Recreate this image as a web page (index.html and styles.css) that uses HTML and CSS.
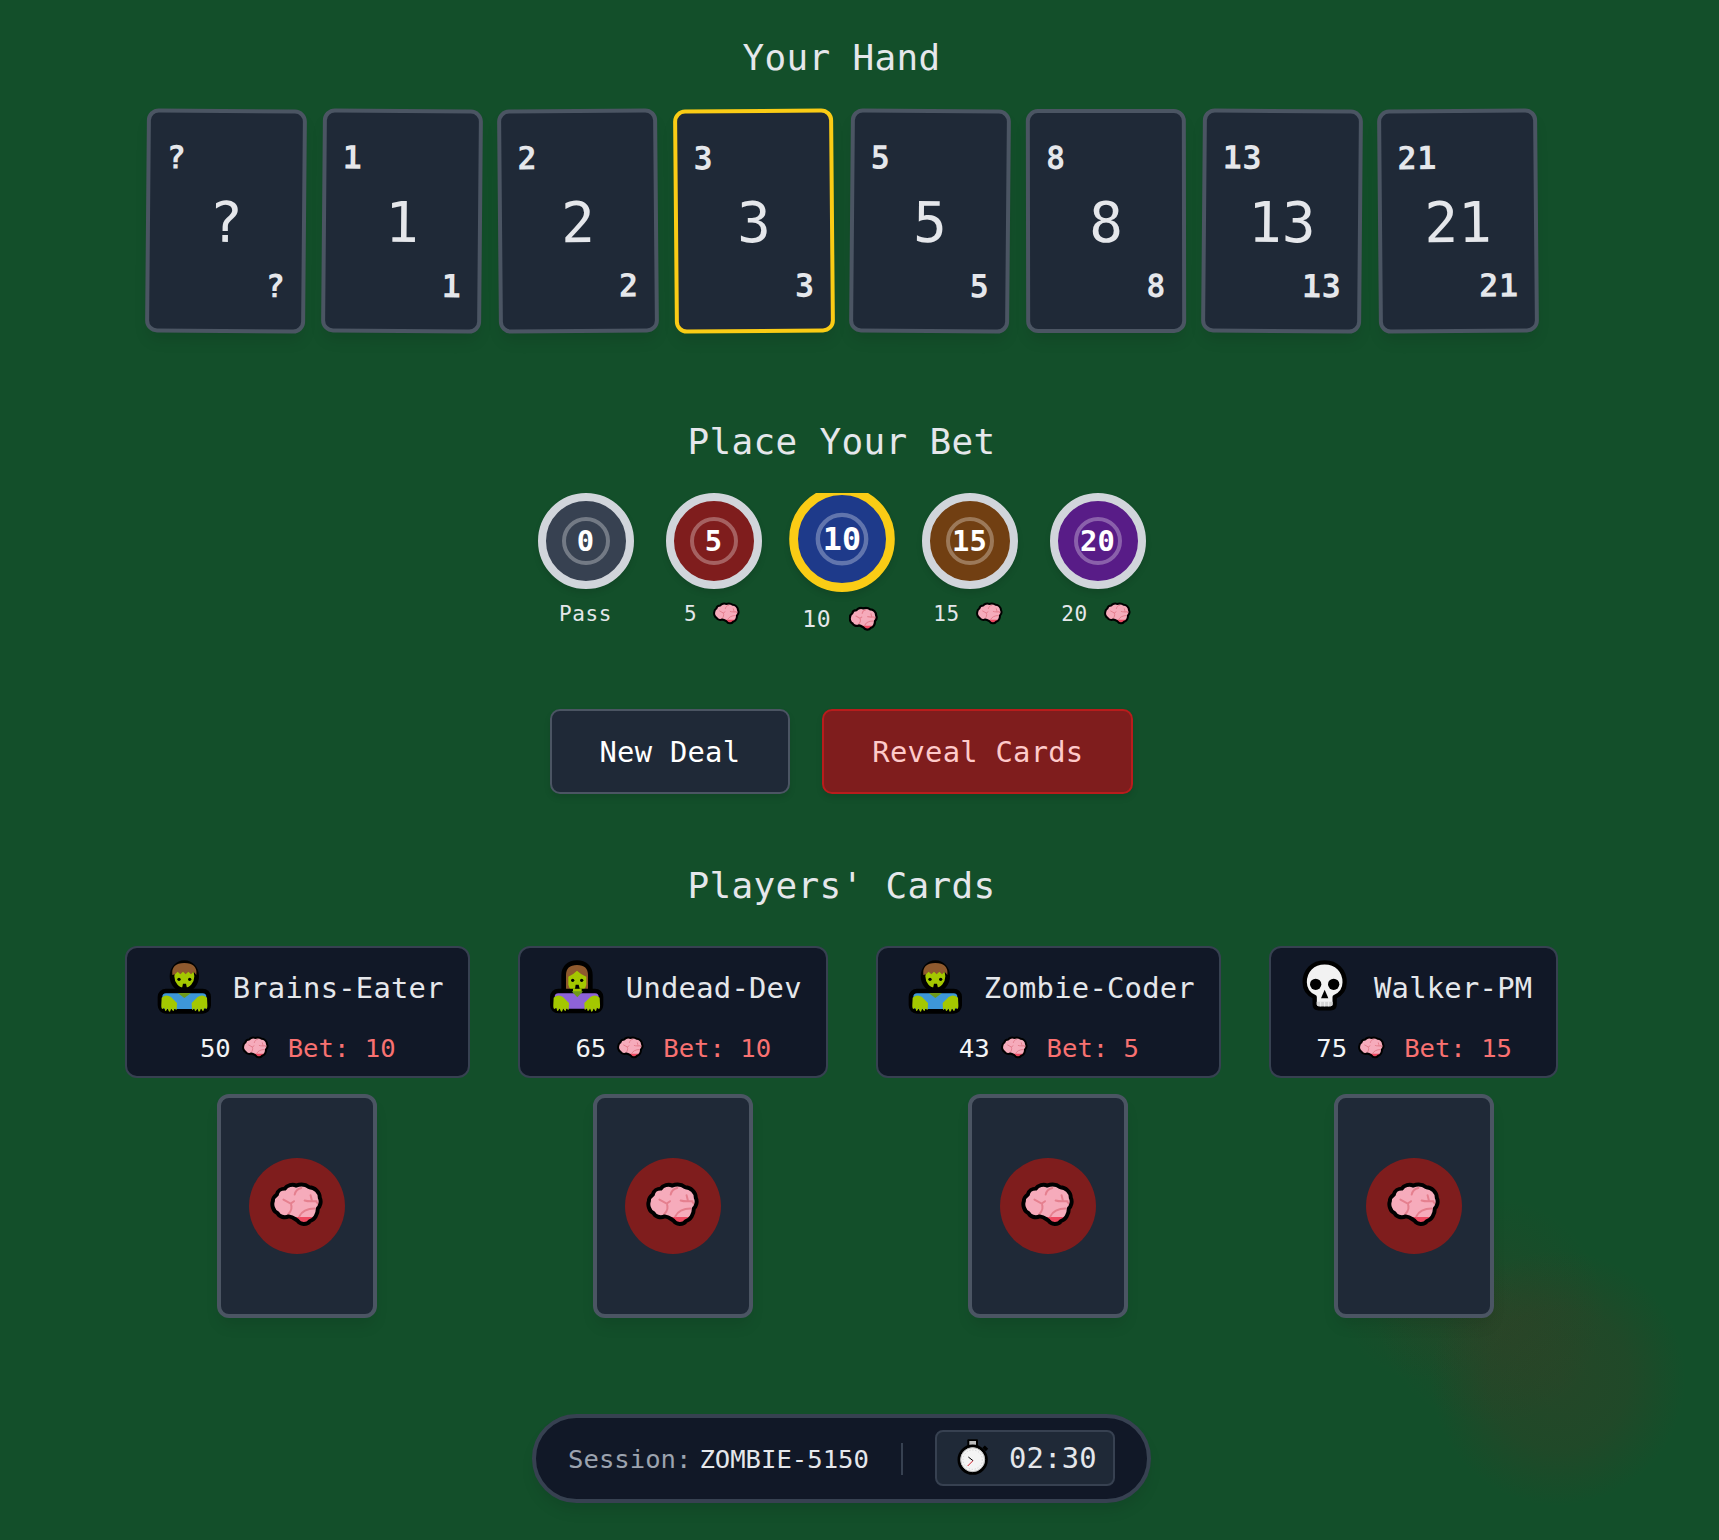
FILE: index.html
```html
<!doctype html>
<html>
<head>
	<meta charset="utf-8">
	<title>Zombie Poker</title>
	<link rel="stylesheet" href="styles.css">
</head>
<body>
	<svg class="defs" aria-hidden="true">
		<symbol id="brain" viewBox="78 92 162 136">
			<path fill="#f6abbb" d="M98 130C100 118 112 112 122 112C128 102 146 97 156 103C170 98 186 100 196 108C212 108 228 122 228 140C234 152 228 166 222 172C222 190 212 206 198 210C190 222 168 222 160 208C150 202 146 198 134 196C120 202 104 196 100 186C86 180 82 160 86 150C86 140 92 134 98 130Z"/>
			<path fill="#ee4a62" d="M150 198H212C208 204 204 208 198 210C190 222 168 222 160 208Z"/>
			<path fill="none" stroke="#e5808f" stroke-width="6" stroke-linecap="round" d="M152 130C154 120 162 112 172 110M118 145L140 157L150 150M140 157C146 170 140 182 132 190M182 148C195 152 205 150 218 150M200 132C202 140 204 146 204 150M216 150L224 160M166 196C172 182 190 172 212 172"/>
			<path fill="none" stroke="#000" stroke-width="12" stroke-linejoin="round" d="M98 130C100 118 112 112 122 112C128 102 146 97 156 103C170 98 186 100 196 108C212 108 228 122 228 140C234 152 228 166 222 172C222 190 212 206 198 210C190 222 168 222 160 208C150 202 146 198 134 196C120 202 104 196 100 186C86 180 82 160 86 150C86 140 92 134 98 130Z"/>
		</symbol>
		<symbol id="hand" viewBox="0 0 204 192">
			<path fill="#a4c800" d="M34 140Q48 128 62 138L80 156L79 176Q75 178 73 170L70 180Q66 182 63 172L59 182Q55 184 52 172L47 180Q43 180 43 170L36 174Q32 172 33 160Z"/>
		</symbol>
	</svg>

	<div id="content">
		<h2 class="title">Your Hand</h2>
		<div class="hand">
			<div class="card tilt-a"><span class="corner">?</span><span class="face">?</span><span class="corner end">?</span></div>
			<div class="card tilt-a"><span class="corner">1</span><span class="face">1</span><span class="corner end">1</span></div>
			<div class="card tilt-b"><span class="corner">2</span><span class="face">2</span><span class="corner end">2</span></div>
			<div class="card tilt-b selected"><span class="corner">3</span><span class="face">3</span><span class="corner end">3</span></div>
			<div class="card tilt-a"><span class="corner">5</span><span class="face">5</span><span class="corner end">5</span></div>
			<div class="card tilt-c"><span class="corner">8</span><span class="face">8</span><span class="corner end">8</span></div>
			<div class="card tilt-a"><span class="corner">13</span><span class="face">13</span><span class="corner end">13</span></div>
			<div class="card tilt-b"><span class="corner">21</span><span class="face">21</span><span class="corner end">21</span></div>
		</div>

		<h2 class="title bet-title">Place Your Bet</h2>
		<div class="chips">
			<button class="chip-btn"><span class="chip grey"><span class="ring">0</span></span><span class="chip-label">Pass</span></button>
			<button class="chip-btn"><span class="chip red"><span class="ring">5</span></span><span class="chip-label">5<svg class="brain-label"><use href="#brain"/></svg></span></button>
			<button class="chip-btn selected"><span class="chip blue"><span class="ring">10</span></span><span class="chip-label">10<svg class="brain-label"><use href="#brain"/></svg></span></button>
			<button class="chip-btn"><span class="chip brown"><span class="ring">15</span></span><span class="chip-label">15<svg class="brain-label"><use href="#brain"/></svg></span></button>
			<button class="chip-btn"><span class="chip purple"><span class="ring">20</span></span><span class="chip-label">20<svg class="brain-label"><use href="#brain"/></svg></span></button>
		</div>

		<div class="actions">
			<button class="action">New Deal</button>
			<button class="action danger">Reveal Cards</button>
		</div>

		<h2 class="title players-title">Players' Cards</h2>
		<div class="players">
			<div class="player">
				<div class="plate">
					<div class="who">
						<svg class="avatar" viewBox="5 15 192 192">
							<rect x="29" y="120" width="146" height="61" rx="18" fill="#3d97d8" stroke="#000" stroke-width="14"/>
							<ellipse cx="102" cy="76" rx="37" ry="41" fill="#a4c800" stroke="#000" stroke-width="14"/>
							<path fill="#8f5a2e" d="M66 72Q62 36 102 36Q142 36 138 72L130 62L122 70L114 62L106 70L98 62L90 70L82 62L74 70Z"/>
							<path fill="#6f9a1a" d="M82 126H122L102 141Z"/>
							<circle cx="86" cy="85" r="5"/><circle cx="118" cy="85" r="5"/>
							<path d="M95 111L98 98H107L110 111Z"/>
							<use href="#hand" width="204" height="192"/>
							<use href="#hand" width="204" height="192" transform="translate(204 0) scale(-1 1)"/>
						</svg>
						<span class="name">Brains-Eater</span>
					</div>
					<div class="stats"><span class="score">50<svg class="brain-stat"><use href="#brain"/></svg></span><span class="bet">Bet: 10</span></div>
				</div>
				<div class="card back"><span class="seal"><svg class="brain-seal"><use href="#brain"/></svg></span></div>
			</div>
			<div class="player">
				<div class="plate">
					<div class="who">
						<svg class="avatar" viewBox="0 0 192 192">
							<path fill="#8f5a2e" stroke="#000" stroke-width="14" stroke-linejoin="round" d="M56 108V58C56 34 72 20 96 20C120 20 136 34 136 58V108Z"/>
							<path fill="#a4c800" d="M70 62Q84 56 96 44Q108 56 124 62V86Q120 106 96 108Q74 106 70 86Z"/>
							<rect x="22" y="105" width="146" height="60" rx="18" fill="#8e63d8" stroke="#000" stroke-width="14"/>
							<path fill="#a4c800" d="M84 98H110V110H84Z"/>
							<path fill="#6f9a1a" d="M80 106H114L97 124Z"/>
							<circle cx="83" cy="73" r="5"/><circle cx="110" cy="73" r="5"/>
							<path d="M90 98L92 86H101L104 98Z"/>
							<use href="#hand" width="204" height="192" transform="translate(-8 -15)"/>
							<use href="#hand" width="204" height="192" transform="translate(198 -15) scale(-1 1)"/>
						</svg>
						<span class="name">Undead-Dev</span>
					</div>
					<div class="stats"><span class="score">65<svg class="brain-stat"><use href="#brain"/></svg></span><span class="bet">Bet: 10</span></div>
				</div>
				<div class="card back"><span class="seal"><svg class="brain-seal"><use href="#brain"/></svg></span></div>
			</div>
			<div class="player">
				<div class="plate">
					<div class="who">
						<svg class="avatar" viewBox="5 15 192 192">
							<rect x="29" y="120" width="146" height="61" rx="18" fill="#3d97d8" stroke="#000" stroke-width="14"/>
							<ellipse cx="102" cy="76" rx="37" ry="41" fill="#a4c800" stroke="#000" stroke-width="14"/>
							<path fill="#8f5a2e" d="M66 72Q62 36 102 36Q142 36 138 72L130 62L122 70L114 62L106 70L98 62L90 70L82 62L74 70Z"/>
							<path fill="#6f9a1a" d="M82 126H122L102 141Z"/>
							<circle cx="86" cy="85" r="5"/><circle cx="118" cy="85" r="5"/>
							<path d="M95 111L98 98H107L110 111Z"/>
							<use href="#hand" width="204" height="192"/>
							<use href="#hand" width="204" height="192" transform="translate(204 0) scale(-1 1)"/>
						</svg>
						<span class="name">Zombie-Coder</span>
					</div>
					<div class="stats"><span class="score">43<svg class="brain-stat"><use href="#brain"/></svg></span><span class="bet">Bet: 5</span></div>
				</div>
				<div class="card back"><span class="seal"><svg class="brain-seal"><use href="#brain"/></svg></span></div>
			</div>
			<div class="player">
				<div class="plate">
					<div class="who">
						<svg class="avatar skull" viewBox="20 15 183 192">
							<path fill="#f2f2f2" stroke="#000" stroke-width="13" stroke-linejoin="round" d="M106 34C70 34 46 60 46 94C46 114 56 130 76 138V160Q76 172 88 172H124Q136 172 136 160V138C156 130 166 114 166 94C166 60 142 34 106 34Z"/>
							<circle cx="79" cy="100" r="17"/><circle cx="133" cy="100" r="17"/>
							<path d="M106 116L95 142H117Z"/>
							<path fill="#d4d4d4" d="M82 152H130V160Q130 166 124 166H88Q82 166 82 160Z"/>
							<path fill="none" stroke="#f2f2f2" stroke-width="3" d="M94 152V166M106 152V166M118 152V166"/>
						</svg>
						<span class="name">Walker-PM</span>
					</div>
					<div class="stats"><span class="score">75<svg class="brain-stat"><use href="#brain"/></svg></span><span class="bet">Bet: 15</span></div>
				</div>
				<div class="card back"><span class="seal"><svg class="brain-seal"><use href="#brain"/></svg></span></div>
			</div>
		</div>

		<div class="session">
			<span class="session-key">Session:</span>
			<span class="session-id">ZOMBIE-5150</span>
			<span class="divider"></span>
			<div class="timer">
				<svg class="timer-icon" viewBox="8 13 120 120">
					<rect x="51" y="14" width="32" height="24" rx="3" fill="#000"/>
					<rect x="57" y="19" width="20" height="14" fill="#bdbdbd"/>
					<path d="M100 36L110 46" stroke="#000" stroke-width="10"/>
					<circle cx="67" cy="75" r="41" fill="#f4f4f4" stroke="#000" stroke-width="9"/>
					<circle cx="67" cy="75" r="36" fill="none" stroke="#bdbdbd" stroke-width="3"/>
					<circle cx="67" cy="75" r="29" fill="none" stroke="#cfcfcf" stroke-width="3" stroke-dasharray="3 6"/>
					<path d="M54 67L68 78" stroke="#000" stroke-width="3"/>
					<path d="M68 78L52 94" stroke="#d3202c" stroke-width="3"/>
				</svg>
				<span class="time">02:30</span>
			</div>
		</div>
	</div>
</body></html>
```

FILE: styles.css
```css
* {
	box-sizing: border-box;
}
html, body {
	margin: 0;
}
body {
	min-height: 1540px;
	background-color: #134f2a;
	background-image:
		radial-gradient(circle 128px at 1558px 1378px, rgba(127, 29, 29, 0.16), rgba(127, 29, 29, 0.12) 55%, rgba(127, 29, 29, 0) 100%),
		radial-gradient(circle 115px at 1490px 1310px, rgba(127, 29, 29, 0.12), rgba(127, 29, 29, 0) 100%),
		radial-gradient(circle 90px at 1425px 1292px, rgba(127, 29, 29, 0.09), rgba(127, 29, 29, 0) 100%);
	background-repeat: no-repeat;
	font-family: "DejaVu Sans Mono", monospace;
	color: #e5e7eb;
}
button {
	font-family: inherit;
	color: inherit;
	cursor: pointer;
}
.defs {
	position: absolute;
	width: 0;
	height: 0;
}
#content {
	width: 1683px;
	display: flex;
	flex-direction: column;
	align-items: center;
	padding-top: 37px;
}

.title {
	margin: 0;
	font-size: 36px;
	font-weight: 400;
	letter-spacing: 0.33px;
	line-height: 42px;
}
.bet-title {
	margin-top: 88px;
}
.players-title {
	margin-top: 71px;
}

.hand {
	display: flex;
	gap: 16px;
	margin-top: 30px;
}
.card {
	display: flex;
	flex-direction: column;
	justify-content: space-between;
	width: 160px;
	height: 224px;
	padding: 26px 16px 24px;
	background: #1f2937;
	border: 4px solid #4b5563;
	border-radius: 12px;
	box-shadow: 0 10px 15px -3px rgba(0, 0, 0, 0.1);
}
.tilt-a {
	transform: rotate(0.5deg);
}
.tilt-b {
	transform: rotate(-0.5deg);
}
.tilt-c {
	transform: rotate(-0.1deg);
}
.card.selected {
	border-color: #facc15;
}
.corner {
	font-size: 32px;
	font-weight: 700;
	letter-spacing: 0.5px;
}
.corner.end {
	text-align: right;
}
.face {
	padding-top: 2px;
	font-size: 56px;
	line-height: 66px;
	text-align: center;
}

.chips {
	display: flex;
	justify-content: center;
	gap: 32px;
	width: 100%;
	height: 150px;
	margin-top: 30px;
	overflow: hidden;
}
.chip-btn {
	display: flex;
	flex-direction: column;
	align-items: center;
	gap: 11px;
	width: 96px;
	height: 134px;
	padding: 0;
	background: none;
	border: 0;
}
.chip-btn.selected {
	transform: scale(1.1);
}
.chip {
	display: flex;
	align-items: center;
	justify-content: center;
	flex: none;
	width: 96px;
	height: 96px;
	border: 8px solid #d1d5db;
	border-radius: 50%;
	box-shadow: 0 4px 6px rgba(0, 0, 0, 0.1);
}
.selected .chip {
	border-color: #facc15;
}
.ring {
	display: flex;
	align-items: center;
	justify-content: center;
	width: 48px;
	height: 48px;
	border: 4px solid rgba(255, 255, 255, 0.3);
	border-radius: 50%;
	color: #fff;
	font-size: 28.8px;
	font-weight: 700;
	letter-spacing: 0.26px;
}
.grey { background: #374151; }
.red { background: #7f1d1d; }
.blue { background: #1e3a8a; }
.brown { background: #713f12; }
.purple { background: #581c87; }
.chip-label {
	display: flex;
	align-items: center;
	font-size: 21px;
	letter-spacing: 0.56px;
	line-height: 29px;
	white-space: nowrap;
	color: #e5e7eb;
}
.brain-label {
	width: 27px;
	height: 23px;
	margin: -2px 3px 0 16px;
}

.actions {
	display: flex;
	gap: 32px;
	margin-top: 66px;
}
.action {
	padding: 23.5px 48px;
	font-size: 28.8px;
	letter-spacing: 0.26px;
	line-height: 34px;
	background: #1f2937;
	border: 2px solid #4b5563;
	border-radius: 10px;
	color: #fff;
	box-shadow: 0 4px 6px rgba(0, 0, 0, 0.1);
}
.action.danger {
	background: #7f1d1d;
	border-color: #b91c1c;
	color: #fecaca;
}

.players {
	display: flex;
	gap: 48px;
	margin-top: 39px;
}
.player {
	display: flex;
	flex-direction: column;
	align-items: center;
	gap: 16px;
}
.plate {
	height: 132px;
	padding: 8px 24px 0 25px;
	background: #111827;
	border: 2px solid #374151;
	border-radius: 12px;
}
.who {
	display: flex;
	align-items: center;
	gap: 17px;
	margin-bottom: 13px;
}
.avatar {
	width: 64px;
	height: 64px;
}
.avatar.skull {
	width: 61px;
}
.name {
	font-size: 28.8px;
	letter-spacing: 0.26px;
	color: #e5e7eb;
	white-space: nowrap;
}
.stats {
	display: flex;
	justify-content: center;
	gap: 19px;
	font-size: 25.6px;
	line-height: 30px;
	white-space: nowrap;
}
.score {
	display: flex;
	align-items: center;
	color: #f3f4f6;
}
.brain-stat {
	width: 27px;
	height: 23px;
	margin: -2px 0 0 11px;
}
.bet {
	color: #f87171;
}
.card.back {
	align-items: center;
	justify-content: center;
	padding: 0;
}
.seal {
	display: flex;
	align-items: center;
	justify-content: center;
	width: 96px;
	height: 96px;
	background: #7f1d1d;
	border-radius: 50%;
}
.brain-seal {
	width: 54px;
	height: 45px;
	margin-bottom: 3px;
}

.session {
	display: flex;
	align-items: center;
	gap: 8px;
	height: 89px;
	margin-top: 96px;
	padding: 0 32px;
	background: #111827;
	border: 4px solid #374151;
	border-radius: 45px;
	font-size: 25.6px;
	box-shadow: 0 10px 15px -3px rgba(0, 0, 0, 0.1);
}
.session-key {
	color: #9ca3af;
}
.divider {
	width: 2px;
	height: 32px;
	margin: 0 24px;
	background: #374151;
}
.timer {
	display: flex;
	align-items: center;
	gap: 16px;
	height: 56px;
	margin-bottom: 2px;
	padding: 0 16px;
	background: #1f2937;
	border: 2px solid #374151;
	border-radius: 8px;
}
.timer-icon {
	width: 40px;
	height: 40px;
	margin-top: 2px;
}
.time {
	font-size: 28.8px;
	letter-spacing: 0.26px;
}
```
